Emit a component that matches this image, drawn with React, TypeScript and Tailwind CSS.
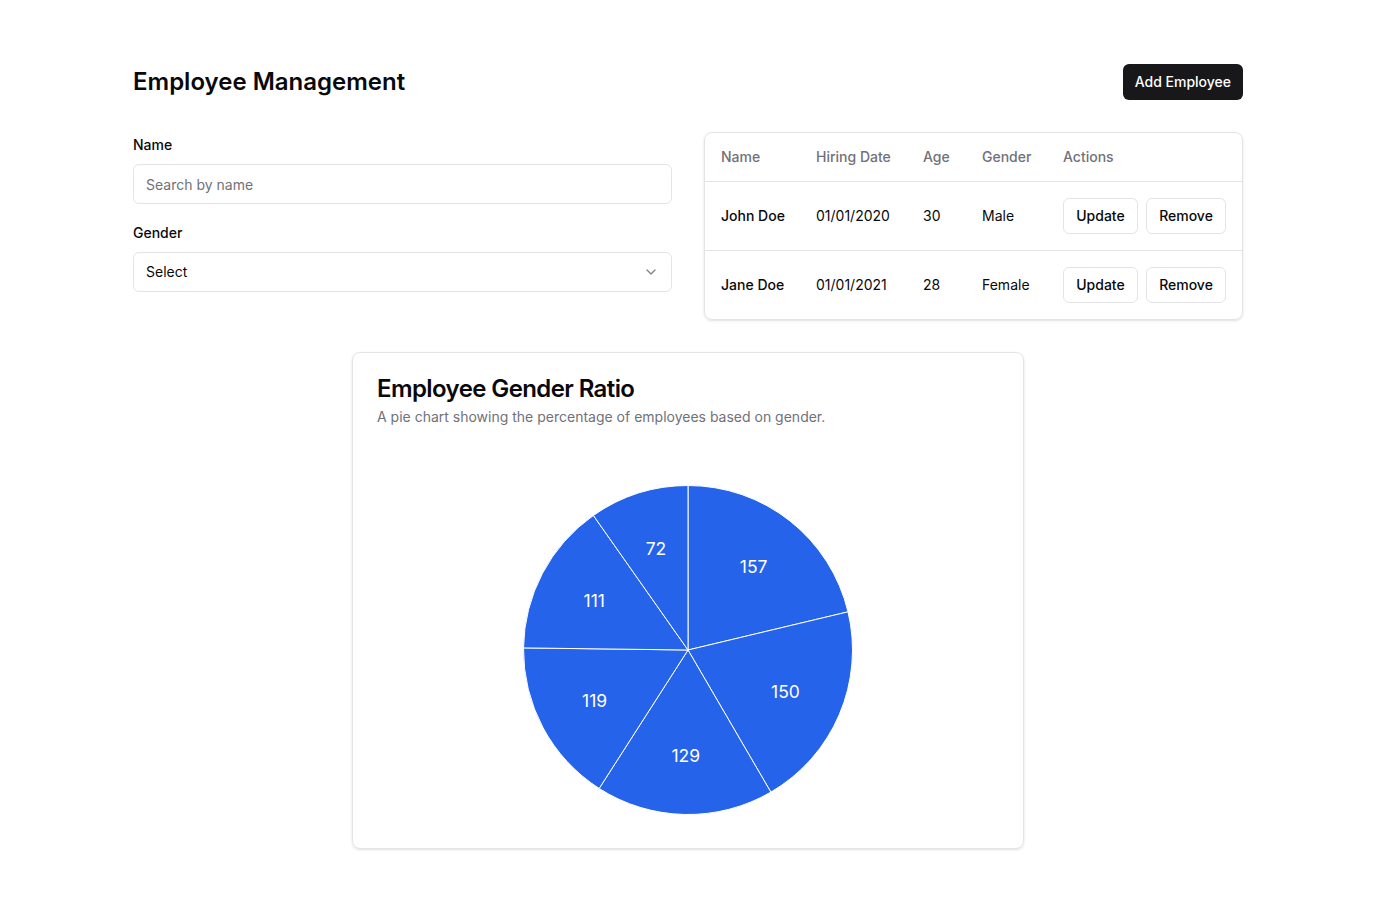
import { ChevronDown } from "lucide-react";

interface Employee {
  name: string;
  hired: string;
  age: number;
  gender: string;
}

const EMPLOYEES: Employee[] = [
  { name: "John Doe", hired: "01/01/2020", age: 30, gender: "Male" },
  { name: "Jane Doe", hired: "01/01/2021", age: 28, gender: "Female" },
];

const SLICES = [157, 150, 129, 119, 111, 72];

function PieChart() {
  const cx = 311;
  const cy = 199;
  const r = 164.5;
  const lr = 106;
  const total = SLICES.reduce((a, b) => a + b, 0);
  let start = 0;
  const pt = (deg: number, rad: number) => {
    const a = (deg * Math.PI) / 180;
    return [cx + rad * Math.sin(a), cy - rad * Math.cos(a)];
  };

  return (
    <svg width="622" height="373" viewBox="0 0 622 373" className="block">
      {SLICES.map((v) => {
        const sweep = (v / total) * 360;
        const end = start + sweep;
        const [x1, y1] = pt(start, r);
        const [x2, y2] = pt(end, r);
        const [lx, ly] = pt(start + sweep / 2, lr);
        const large = sweep > 180 ? 1 : 0;
        const d = `M ${cx} ${cy} L ${x1} ${y1} A ${r} ${r} 0 ${large} 1 ${x2} ${y2} Z`;
        start = end;
        return (
          <g key={v}>
            <path d={d} fill="#2563eb" stroke="#ffffff" strokeWidth="1" />
            <text x={lx} y={ly} fill="#ffffff" fontSize="17.5" textAnchor="middle" dominantBaseline="central">
              {v}
            </text>
          </g>
        );
      })}
    </svg>
  );
}

export default function App() {
  return (
    <div className="min-h-screen bg-white text-[#09090b]" style={{ fontFamily: "Inter, 'Noto Sans', sans-serif" }}>
      <div className="w-[1110px] mx-auto pt-16 pb-16">
        {/* Header */}
        <div className="flex items-center justify-between h-9 mb-8">
          <h1 className="text-2xl font-semibold">Employee Management</h1>
          <button className="h-9 px-3 rounded-md bg-[#18181b] text-white text-sm font-medium">Add Employee</button>
        </div>

        <div className="grid grid-cols-2 gap-8">
          {/* Filters */}
          <div>
            <label className="block text-sm font-medium leading-none pt-[6px]">Name</label>
            <input
              placeholder="Search by name"
              className="mt-3 w-full h-10 px-3 rounded-md border border-[#e4e4e7] text-sm placeholder:text-[#71717a] focus:outline-none"
            />
            <label className="block text-sm font-medium leading-none mt-[22px]">Gender</label>
            <button className="mt-3 w-full h-10 px-3 rounded-md border border-[#e4e4e7] text-sm flex items-center justify-between">
              <span>Select</span>
              <ChevronDown className="w-4 h-4 opacity-50" />
            </button>
          </div>

          {/* Table */}
          <div className="rounded-lg border border-[#e4e4e7] shadow-sm overflow-hidden">
            <table className="w-full text-sm table-fixed whitespace-nowrap">
              <thead>
                <tr className="border-b border-[#e4e4e7]">
                  <th className="h-12 px-4 text-left font-medium text-[#71717a] w-[95px]">Name</th>
                  <th className="h-12 px-4 text-left font-medium text-[#71717a] w-[107px]">Hiring Date</th>
                  <th className="h-12 px-4 text-left font-medium text-[#71717a] w-[59px]">Age</th>
                  <th className="h-12 px-4 text-left font-medium text-[#71717a] w-[81px]">Gender</th>
                  <th className="h-12 px-4 text-left font-medium text-[#71717a]">Actions</th>
                </tr>
              </thead>
              <tbody>
                {EMPLOYEES.map((e, i) => (
                  <tr key={e.name} className={i < EMPLOYEES.length - 1 ? "border-b border-[#e4e4e7]" : ""}>
                    <td className="p-4 font-medium">{e.name}</td>
                    <td className="p-4">{e.hired}</td>
                    <td className="p-4">{e.age}</td>
                    <td className="p-4">{e.gender}</td>
                    <td className="p-4">
                      <div className="flex gap-2">
                        <button className="h-9 w-[75px] rounded-md border border-[#e4e4e7] font-medium">Update</button>
                        <button className="h-9 w-[80px] rounded-md border border-[#e4e4e7] font-medium">Remove</button>
                      </div>
                    </td>
                  </tr>
                ))}
              </tbody>
            </table>
          </div>
        </div>

        {/* Chart card */}
        <div className="mt-8 mx-auto w-[672px] rounded-lg border border-[#e4e4e7] shadow-sm">
          <div className="p-6">
            <h2 className="text-2xl font-semibold leading-none tracking-tight">Employee Gender Ratio</h2>
            <p className="mt-1.5 text-sm text-[#71717a]">A pie chart showing the percentage of employees based on gender.</p>
          </div>
          <div className="px-6 pb-6">
            <PieChart />
          </div>
        </div>
      </div>
    </div>
  );
}
